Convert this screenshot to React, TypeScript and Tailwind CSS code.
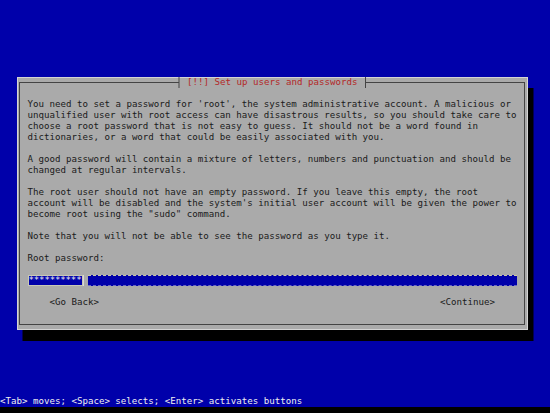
import React from 'react';

const PARAGRAPHS = [
  [
    "You need to set a password for 'root', the system administrative account. A malicious or",
    'unqualified user with root access can have disastrous results, so you should take care to',
    'choose a root password that is not easy to guess. It should not be a word found in',
    'dictionaries, or a word that could be easily associated with you.',
  ],
  [
    'A good password will contain a mixture of letters, numbers and punctuation and should be',
    'changed at regular intervals.',
  ],
  [
    'The root user should not have an empty password. If you leave this empty, the root',
    "account will be disabled and the system's initial user account will be given the power to",
    'become root using the "sudo" command.',
  ],
  ['Note that you will not be able to see the password as you type it.'],
];

const Tick = ({ side }: { side: 'left' | 'right' }) => (
  <svg width="5.5" height="11" viewBox="0 0 5.5 11" className="shrink-0">
    {side === 'left' ? (
      <path d="M0 5.5H3M3 0V11" stroke="#444" strokeWidth="1" fill="none" />
    ) : (
      <path d="M5.5 5.5H2.5M2.5 0V11" stroke="#444" strokeWidth="1" fill="none" />
    )}
  </svg>
);

export default function App() {
  return (
    <div
      className="w-[550px] h-[413px] bg-[#0000aa] flex flex-col overflow-hidden text-[9.15px] leading-[11px]"
      style={{ fontFamily: '"DejaVu Sans Mono", "Liberation Mono", monospace' }}
    >
      {/* Dialog */}
      <div className="mt-[77px] ml-[16.5px] w-[511.5px] h-[253px] bg-[#aaaaaa] flex flex-col shadow-[inset_0_0_0_1px_#d4d4d4,5.5px_11px_0_0_#000]">
        {/* title bar */}
        <div className="h-[11px] flex items-start px-[2.75px]">
          <div className="flex-1 h-[5.5px] mt-[5px] border-t border-l border-[#444]" />
          <Tick side="left" />
          <span className="whitespace-pre text-[#b42828]"> [!!] Set up users and passwords </span>
          <Tick side="right" />
          <div className="flex-1 h-[5.5px] mt-[5px] border-t border-r border-[#444]" />
        </div>

        {/* body */}
        <div className="flex-1 mx-[2.75px] mb-[5.5px] border-l border-r border-b border-[#444] px-[7.25px] pb-[5px] text-[#1a1a1a]">
          <div className="h-[11px]" />
          {PARAGRAPHS.map((lines, i) => (
            <div key={i} className="mb-[11px]">
              {lines.map((l, j) => (
                <div key={j} className="whitespace-pre h-[11px]">{l}</div>
              ))}
            </div>
          ))}
          <div className="whitespace-pre h-[11px]">Root password:</div>
          <div className="h-[11px]" />

          {/* entry */}
          <div className="h-[11px] flex">
            <span className="w-[55px] bg-[#0000aa] text-[#eeeeee] whitespace-pre border border-[#c8c8b4] leading-[9px] tracking-[-0.2px]">**********</span>
            <span className="w-[5.5px] border-l border-[#d8d8d8]" />
            <div className="flex-1 bg-[#0000aa] border-t border-[#c8c8a8] border-b border-b-[#6a6ac4] border-dashed" />
          </div>
          <div className="h-[11px]" />

          {/* buttons */}
          <div className="h-[11px] flex justify-between px-[22px] whitespace-pre">
            <span>&lt;Go Back&gt;</span>
            <span>&lt;Continue&gt;</span>
          </div>
        </div>
      </div>

      <div className="flex-1" />

      {/* status line */}
      <div className="h-[11px] whitespace-pre text-[#f0f0f0]">
        &lt;Tab&gt; moves; &lt;Space&gt; selects; &lt;Enter&gt; activates buttons
      </div>
      <div className="h-[6px] bg-black" />
    </div>
  );
}
